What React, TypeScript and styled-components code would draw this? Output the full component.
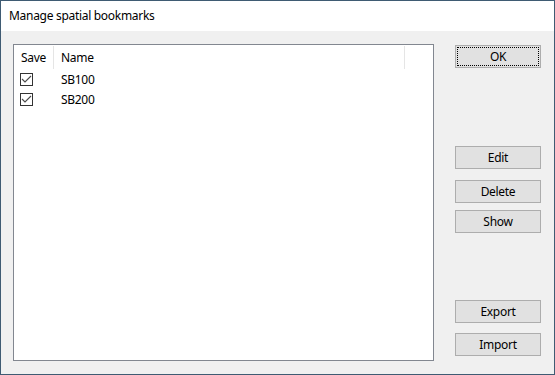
import React, { FC } from "react";
import styled, { createGlobalStyle } from "styled-components";

const GlobalStyle = createGlobalStyle`
  html, body {
    margin: 0;
    padding: 0;
    background: #ffffff;
  }
  body {
    font-family: "Noto Sans", "Open Sans", sans-serif;
    font-size: 12px;
    color: #000000;
    letter-spacing: -0.3px;
  }
`;

const Window = styled.div`
  width: 555px;
  height: 375px;
  box-sizing: border-box;
  border: 1px solid #3f5b73;
  display: flex;
  flex-direction: column;
  background: #f0f0f0;
`;

const TitleBar = styled.div`
  height: 30px;
  flex: none;
  background: #ffffff;
  display: flex;
  align-items: center;
  padding-left: 8px;
  padding-bottom: 1px;
  box-sizing: border-box;
`;

const Body = styled.div`
  flex: 1;
  display: flex;
  padding: 13px 13px 13px 12px;
  gap: 21px;
  min-height: 0;
`;

const ListBox = styled.div`
  width: 421px;
  height: 317px;
  box-sizing: border-box;
  border: 1px solid #828790;
  background: #ffffff;
  display: flex;
  flex-direction: column;
`;

const HeaderRow = styled.div`
  display: flex;
  height: 24px;
  align-items: stretch;
`;

interface HeaderCellProps {
  width: number;
  padLeft: number;
  divider?: boolean;
}

const HeaderCell = styled.div<HeaderCellProps>`
  width: ${(p) => p.width}px;
  padding-left: ${(p) => p.padLeft}px;
  box-sizing: border-box;
  display: flex;
  align-items: center;
  border-right: ${(p) => (p.divider ? "1px solid #e5e5e5" : "none")};
  margin: 1px 0 0;
`;

const Row = styled.div`
  display: flex;
  height: 20px;
  align-items: center;
`;

const CheckCell = styled.div`
  width: 40px;
  padding-left: 6px;
  box-sizing: border-box;
  display: flex;
  align-items: center;
`;

const NameCell = styled.div`
  padding-left: 7px;
`;

const ButtonColumn = styled.div`
  width: 86px;
  display: flex;
  flex-direction: column;
`;

interface ButtonProps {
  top: number;
  focused?: boolean;
}

const Button = styled.div<ButtonProps>`
  margin-top: ${(p) => p.top}px;
  height: 23px;
  box-sizing: border-box;
  border: 1px solid #adadad;
  background: #e1e1e1;
  display: flex;
  align-items: center;
  justify-content: center;
  position: relative;
  padding-bottom: 1px;
  &::after {
    content: "";
    display: ${(p) => (p.focused ? "block" : "none")};
    position: absolute;
    inset: 1px;
    border: 1px dotted #000000;
  }
`;

const CheckBox: FC = () => (
  <svg width="13" height="13" viewBox="0 0 13 13">
    <rect x="0.5" y="0.5" width="12" height="12" fill="#ffffff" stroke="#333333" />
    <path d="M2 6 L5 9 L11 3" fill="none" stroke="#4a4a4a" strokeWidth="1.1" />
  </svg>
);

const bookmarks = ["SB100", "SB200"];

const App: FC = () => (
  <>
    <GlobalStyle />
    <Window>
      <TitleBar>Manage spatial bookmarks</TitleBar>
      <Body>
        <ListBox>
          <HeaderRow>
            <HeaderCell width={40} padLeft={7} divider>
              Save
            </HeaderCell>
            <HeaderCell width={351} padLeft={7} divider>
              Name
            </HeaderCell>
          </HeaderRow>
          {bookmarks.map((name) => (
            <Row key={name}>
              <CheckCell>
                <CheckBox />
              </CheckCell>
              <NameCell>{name}</NameCell>
            </Row>
          ))}
        </ListBox>
        <ButtonColumn>
          <Button top={1} focused>
            OK
          </Button>
          <Button top={78}>Edit</Button>
          <Button top={11}>Delete</Button>
          <Button top={7}>Show</Button>
          <Button top={67}>Export</Button>
          <Button top={10}>Import</Button>
        </ButtonColumn>
      </Body>
    </Window>
  </>
);

export default App;
